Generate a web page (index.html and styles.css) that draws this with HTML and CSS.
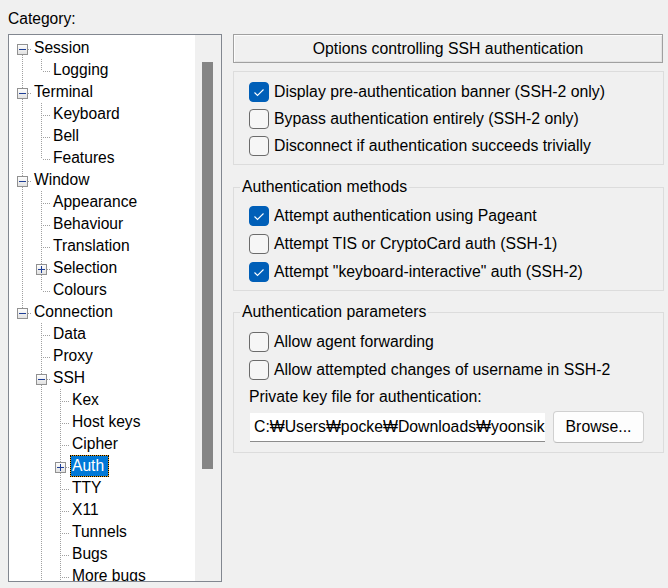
FILE: index.html
```html
<!DOCTYPE html>
<html>
<head>
<meta charset="utf-8">
<link rel="stylesheet" href="styles.css">
</head>
<body>
<div class="dialog">
  <div class="left">
    <div class="cat-label">Category:</div>
    <div class="treebox">
      <div class="tree">
        <div class="row"><span class="c boxcell bot"><span class="exp minus"></span></span><span class="lbl">Session</span></div>
        <div class="row"><span class="c pipe"></span><span class="c elbow"></span><span class="lbl">Logging</span></div>
        <div class="row"><span class="c boxcell full"><span class="exp minus"></span></span><span class="lbl">Terminal</span></div>
        <div class="row"><span class="c pipe"></span><span class="c tee"></span><span class="lbl">Keyboard</span></div>
        <div class="row"><span class="c pipe"></span><span class="c tee"></span><span class="lbl">Bell</span></div>
        <div class="row"><span class="c pipe"></span><span class="c elbow"></span><span class="lbl">Features</span></div>
        <div class="row"><span class="c boxcell full"><span class="exp minus"></span></span><span class="lbl">Window</span></div>
        <div class="row"><span class="c pipe"></span><span class="c tee"></span><span class="lbl">Appearance</span></div>
        <div class="row"><span class="c pipe"></span><span class="c tee"></span><span class="lbl">Behaviour</span></div>
        <div class="row"><span class="c pipe"></span><span class="c tee"></span><span class="lbl">Translation</span></div>
        <div class="row"><span class="c pipe"></span><span class="c boxcell full"><span class="exp plus"></span></span><span class="lbl">Selection</span></div>
        <div class="row"><span class="c pipe"></span><span class="c elbow"></span><span class="lbl">Colours</span></div>
        <div class="row"><span class="c boxcell top"><span class="exp minus"></span></span><span class="lbl">Connection</span></div>
        <div class="row"><span class="c"></span><span class="c tee"></span><span class="lbl">Data</span></div>
        <div class="row"><span class="c"></span><span class="c tee"></span><span class="lbl">Proxy</span></div>
        <div class="row"><span class="c"></span><span class="c boxcell full"><span class="exp minus"></span></span><span class="lbl">SSH</span></div>
        <div class="row"><span class="c"></span><span class="c pipe"></span><span class="c tee"></span><span class="lbl">Kex</span></div>
        <div class="row"><span class="c"></span><span class="c pipe"></span><span class="c tee"></span><span class="lbl">Host keys</span></div>
        <div class="row"><span class="c"></span><span class="c pipe"></span><span class="c tee"></span><span class="lbl">Cipher</span></div>
        <div class="row"><span class="c"></span><span class="c pipe"></span><span class="c boxcell full"><span class="exp plus"></span></span><span class="lbl sel">Auth</span></div>
        <div class="row"><span class="c"></span><span class="c pipe"></span><span class="c tee"></span><span class="lbl">TTY</span></div>
        <div class="row"><span class="c"></span><span class="c pipe"></span><span class="c tee"></span><span class="lbl">X11</span></div>
        <div class="row"><span class="c"></span><span class="c pipe"></span><span class="c tee"></span><span class="lbl">Tunnels</span></div>
        <div class="row"><span class="c"></span><span class="c pipe"></span><span class="c tee"></span><span class="lbl">Bugs</span></div>
        <div class="row"><span class="c"></span><span class="c pipe"></span><span class="c tee"></span><span class="lbl">More bugs</span></div>
      </div>
      <div class="scroll"><div class="thumb"></div></div>
    </div>
  </div>

  <div class="right">
    <div class="header">Options controlling SSH authentication</div>

    <div class="group g1">
      <div class="crow"><span class="cb on"><svg viewBox="0 0 20 20" width="20" height="20"><polyline points="5.5,10.5 8.5,13.5 14.5,7.5" fill="none" stroke="#fff" stroke-width="1.1"/></svg></span><span>Display pre-authentication banner (SSH-2 only)</span></div>
      <div class="crow"><span class="cb"></span><span>Bypass authentication entirely (SSH-2 only)</span></div>
      <div class="crow"><span class="cb"></span><span>Disconnect if authentication succeeds trivially</span></div>
    </div>

    <fieldset class="group g2">
      <legend>Authentication methods</legend>
      <div class="crow"><span class="cb on"><svg viewBox="0 0 20 20" width="20" height="20"><polyline points="5.5,10.5 8.5,13.5 14.5,7.5" fill="none" stroke="#fff" stroke-width="1.1"/></svg></span><span>Attempt authentication using Pageant</span></div>
      <div class="crow"><span class="cb"></span><span>Attempt TIS or CryptoCard auth (SSH-1)</span></div>
      <div class="crow"><span class="cb on"><svg viewBox="0 0 20 20" width="20" height="20"><polyline points="5.5,10.5 8.5,13.5 14.5,7.5" fill="none" stroke="#fff" stroke-width="1.1"/></svg></span><span>Attempt "keyboard-interactive" auth (SSH-2)</span></div>
    </fieldset>

    <fieldset class="group g3">
      <legend>Authentication parameters</legend>
      <div class="crow"><span class="cb"></span><span>Allow agent forwarding</span></div>
      <div class="crow"><span class="cb"></span><span>Allow attempted changes of username in SSH-2</span></div>
      <div class="keylabel">Private key file for authentication:</div>
      <div class="keyrow">
        <div class="keyinput">C:₩Users₩pocke₩Downloads₩yoonsik-</div>
        <div class="btn">Browse...</div>
      </div>
    </fieldset>
  </div>
</div>
</body>
</html>
```

FILE: styles.css
```css
html, body {
  margin: 0;
  padding: 0;
  background: #f0f0f0;
}
body {
  font-family: "Liberation Sans", Arial, sans-serif;
  font-size: 15.6px;
  color: #000;
  width: 668px;
  height: 588px;
  overflow: hidden;
}
.dialog {
  display: flex;
  align-items: flex-start;
  padding: 8px 0 0 8px;
}
.left {
  width: 214px;
  display: flex;
  flex-direction: column;
}
.cat-label {
  line-height: 22px;
  height: 22px;
}
.treebox {
  margin-top: 4px;
  height: 546px;
  border: 1px solid #828790;
  display: flex;
  overflow: hidden;
}
.tree {
  width: 182px;
  background: #fff;
  padding: 2px 0 0 4px;
  overflow: hidden;
}
.row {
  display: flex;
  height: 22px;
  white-space: nowrap;
}
.c {
  flex: none;
  width: 19px;
  height: 22px;
  --dv: repeating-linear-gradient(to bottom, #a0a0a0 0 1px, transparent 1px 2px);
  --dh: repeating-linear-gradient(to right, #a0a0a0 0 1px, transparent 1px 2px);
}
.pipe {
  background: var(--dv) 9px 0 / 1px 22px no-repeat;
}
.tee {
  background: var(--dv) 9px 0 / 1px 22px no-repeat, var(--dh) 11px 12px / 8px 1px no-repeat;
}
.elbow {
  background: var(--dv) 9px 0 / 1px 12px no-repeat, var(--dh) 11px 12px / 8px 1px no-repeat;
}
.boxcell.full {
  background: var(--dv) 9px 0 / 1px 22px no-repeat, var(--dh) 11px 12px / 8px 1px no-repeat;
}
.boxcell.bot {
  background: var(--dv) 9px 12px / 1px 10px no-repeat, var(--dh) 11px 12px / 8px 1px no-repeat;
}
.boxcell.top {
  background: var(--dv) 9px 0 / 1px 12px no-repeat, var(--dh) 11px 12px / 8px 1px no-repeat;
}
.boxcell {
  display: flex;
  align-items: flex-start;
}
.exp {
  display: block;
  width: 9px;
  height: 9px;
  margin: 7px 0 0 4px;
  border: 1px solid #919191;
  background-color: #f4f4f4;
}
.exp.minus {
  background: linear-gradient(#1f3f95, #1f3f95) center / 7px 1px no-repeat, linear-gradient(#fdfdfd, #e2e2e2);
}
.exp.plus {
  background: linear-gradient(#1f3f95, #1f3f95) center / 7px 1px no-repeat, linear-gradient(#1f3f95, #1f3f95) center / 1px 7px no-repeat, linear-gradient(#fdfdfd, #e2e2e2);
}
.lbl {
  display: block;
  height: 20px;
  line-height: 20px;
  padding: 0 2px 0 1px;
  border: 1px solid transparent;
}
.lbl.sel {
  padding-right: 4px;
  background: #0078d7;
  color: #fff;
  border-color: #e8a020;
  outline: 1px dotted #000;
  outline-offset: -1px;
}
.scroll {
  width: 26px;
  background: #f0f0f0;
  display: flex;
  justify-content: flex-start;
}
.thumb {
  width: 11px;
  height: 407px;
  margin: 27px 0 0 7px;
  background: #858585;
}

.right {
  margin-left: 11px;
  width: 431px;
  padding-top: 26px;
  display: flex;
  flex-direction: column;
  font-size: 15.8px;
}
.header {
  width: 428px;
  height: 27px;
  line-height: 27px;
  text-align: center;
  border: 1px solid #a0a0a0;
  box-shadow: inset 1px 1px 0 #fcfcfc, inset -1px -1px 0 #e3e3e3;
}
.group {
  margin: 0;
  border: 1px solid #dcdcdc;
  min-width: 0;
}
.g1 {
  margin-top: 8px;
  padding: 6px 0 5px 15px;
}
.g1 .crow {
  height: 27px;
}
fieldset.group legend {
  margin-left: -9px;
  padding: 0 2px;
  line-height: 22px;
  height: 22px;
}
.g2 {
  margin-top: 11px;
  padding: 4px 0 4px 15px;
}
.g3 {
  margin-top: 10px;
  padding: 5px 0 8px 15px;
}
.crow {
  display: flex;
  align-items: center;
  height: 28px;
  gap: 5px;
  white-space: nowrap;
}
.cb {
  flex: none;
  width: 18px;
  height: 18px;
  border: 1px solid #6b6b6b;
  border-radius: 4px;
  background: #f6f6f6;
  display: flex;
}
.cb.on {
  border-color: #005fb8;
  background: #005fb8;
}
.cb svg {
  margin: -1px;
  display: block;
}
.keylabel {
  height: 26px;
  line-height: 26px;
}
.keyrow {
  display: flex;
  align-items: center;
  height: 34px;
}
.keyinput {
  width: 291px;
  height: 28px;
  line-height: 28px;
  padding-left: 4px;
  margin-left: 1px;
  background: #fff;
  border-bottom: 1px solid #8c8c8c;
  overflow: hidden;
  white-space: nowrap;
}
.btn {
  margin-left: 8px;
  width: 89px;
  height: 30px;
  line-height: 30px;
  text-align: center;
  background: #fdfdfd;
  border: 1px solid #d0d0d0;
  border-bottom-color: #bcbcbc;
  border-radius: 4px;
}
```
